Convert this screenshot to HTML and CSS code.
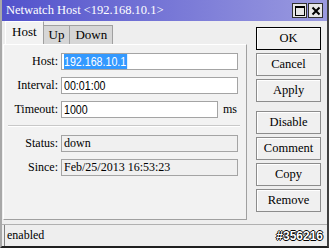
FILE: index.html
```html
<!DOCTYPE html>
<html lang="en">
<head>
    <meta charset="UTF-8">
    <title>Netwatch Host</title>
    <link rel="stylesheet" href="styles.css">
</head>
<body>

<div class="window">
    <div class="titlebar">
        <span class="title">Netwatch Host &lt;192.168.10.1&gt;</span>
        <div class="title-buttons">
            <span class="tbtn">
                <svg width="10" height="10" viewBox="0 0 10 10"><rect x="0.5" y="0.5" width="9" height="9" fill="none" stroke="#000"/><line x1="0" y1="1.5" x2="10" y2="1.5" stroke="#000"/></svg>
            </span>
            <span class="tbtn">
                <svg width="10" height="10" viewBox="0 0 10 10"><path d="M1.5 1.5 L8.5 8.5 M8.5 1.5 L1.5 8.5" stroke="#000" stroke-width="2"/></svg>
            </span>
        </div>
    </div>

    <div class="content">
        <div class="left">
            <div class="tabs">
                <span class="tab active">Host</span>
                <span class="tab">Up</span>
                <span class="tab">Down</span>
            </div>
            <div class="panel">
                <div class="row">
                    <label>Host:</label>
                    <div class="field input"><span class="value selected">192.168.10.1</span></div>
                </div>
                <div class="row">
                    <label>Interval:</label>
                    <div class="field input"><span class="value">00:01:00</span></div>
                </div>
                <div class="row">
                    <label>Timeout:</label>
                    <div class="field input short"><span class="value">1000</span></div>
                    <span class="unit">ms</span>
                </div>
                <div class="separator"></div>
                <div class="row">
                    <label>Status:</label>
                    <div class="field readonly">down</div>
                </div>
                <div class="row">
                    <label>Since:</label>
                    <div class="field readonly">Feb/25/2013 16:53:23</div>
                </div>
            </div>
        </div>

        <div class="buttons">
            <button class="default">OK</button>
            <button>Cancel</button>
            <button>Apply</button>
            <button class="spaced">Disable</button>
            <button>Comment</button>
            <button>Copy</button>
            <button>Remove</button>
        </div>
    </div>

    <div class="statusbar">
        <span class="status-text">enabled</span>
        <span class="watermark">#356216</span>
    </div>
</div>

</body>
</html>
```

FILE: styles.css
```css
body {
    margin: 0;
    padding: 0;
    font-family: "Liberation Serif", serif;
    font-size: 12px;
    color: #000;
}

.window {
    width: 329px;
    height: 248px;
    box-sizing: border-box;
    display: flex;
    flex-direction: column;
    background-color: #eeeeee;
    border-left: 2px solid #a8a8a8;
    border-right: 2px solid #404040;
    border-bottom: 2px solid #202020;
}

.titlebar {
    height: 21px;
    flex-shrink: 0;
    display: flex;
    align-items: center;
    justify-content: space-between;
    padding: 0 4px 0 4px;
    background: linear-gradient(to right, #5252cc, #9a9ae0);
    color: white;
}

.title {
    font-size: 12.5px;
    line-height: 21px;
}

.title-buttons {
    display: flex;
    gap: 1px;
}

.tbtn {
    width: 13px;
    height: 13px;
    display: flex;
    align-items: center;
    justify-content: center;
    background-color: #e6e6e6;
    border: 1px solid #303030;
}

.content {
    flex: 1;
    display: flex;
    gap: 9px;
}

.left {
    width: 244px;
    padding-left: 1px;
    display: flex;
    flex-direction: column;
}

.tabs {
    display: flex;
    align-items: flex-end;
    height: 23px;
    padding-left: 2px;
    font-size: 13px;
}

.tab {
    height: 18px;
    line-height: 18px;
    padding: 0 5px;
    background-color: #d6d6d6;
    border: 1px solid #a0a0a0;
    border-bottom: none;
}

.tab + .tab {
    border-left: none;
}

.tab.active {
    height: 22px;
    line-height: 20px;
    padding: 0 6px;
    background-color: #f2f2f2;
    border-color: #ffffff #a0a0a0 #ffffff #ffffff;
}

.panel {
    height: 176px;
    box-sizing: border-box;
    padding-top: 8px;
    background-color: #f2f2f2;
    border: 1px solid #a0a0a0;
    border-top-color: #ffffff;
    border-left-color: #ffffff;
}

.row {
    display: flex;
    align-items: center;
    height: 17px;
    margin-bottom: 7px;
}

.row label {
    width: 54px;
    text-align: right;
    padding-right: 3px;
}

.field {
    width: 177px;
    height: 17px;
    box-sizing: border-box;
    border: 1px solid #a4a4a4;
    padding-left: 2px;
    line-height: 15px;
    white-space: nowrap;
}

.field.input {
    background-color: white;
    font-family: "Liberation Sans", sans-serif;
    font-size: 13px;
}

.field.input .value {
    display: inline-block;
    transform: scaleX(0.82);
    transform-origin: left center;
}

.field.short {
    width: 157px;
}

.field.readonly {
    background-color: #f0f0f0;
}

.selected {
    background-color: #3399ff;
    color: white;
    padding-right: 1px;
}

.unit {
    margin-left: 5px;
}

.separator {
    height: 0;
    margin: 2px 6px 8px 4px;
    border-top: 1px solid #c8c8c8;
    border-bottom: 1px solid #ffffff;
}

.buttons {
    display: flex;
    flex-direction: column;
    gap: 3px;
    padding-top: 6px;
}

.buttons button {
    width: 65px;
    height: 23px;
    padding: 0;
    font-family: "Liberation Serif", serif;
    font-size: 12.5px;
    background-color: #f0f0f0;
    border: 1px solid #8c8c8c;
    box-shadow: inset 1px 1px 0 #ffffff;
}

.buttons button.default {
    border: 1px solid #000000;
}

.buttons button.spaced {
    margin-top: 6px;
}

.statusbar {
    height: 21px;
    margin-top: 3px;
    display: flex;
    align-items: center;
    justify-content: space-between;
    border-top: 1px solid #b0b0b0;
    padding: 0 4px 0 2px;
}

.status-text {
    border-left: 1px solid #808080;
    height: 21px;
    line-height: 21px;
    padding-left: 2px;
}

.watermark {
    font-family: "Liberation Sans", sans-serif;
    font-weight: bold;
    font-size: 12px;
    color: white;
    text-shadow: 1px 0 0 #000, -1px 0 0 #000, 0 1px 0 #000, 0 -1px 0 #000;
}
```
